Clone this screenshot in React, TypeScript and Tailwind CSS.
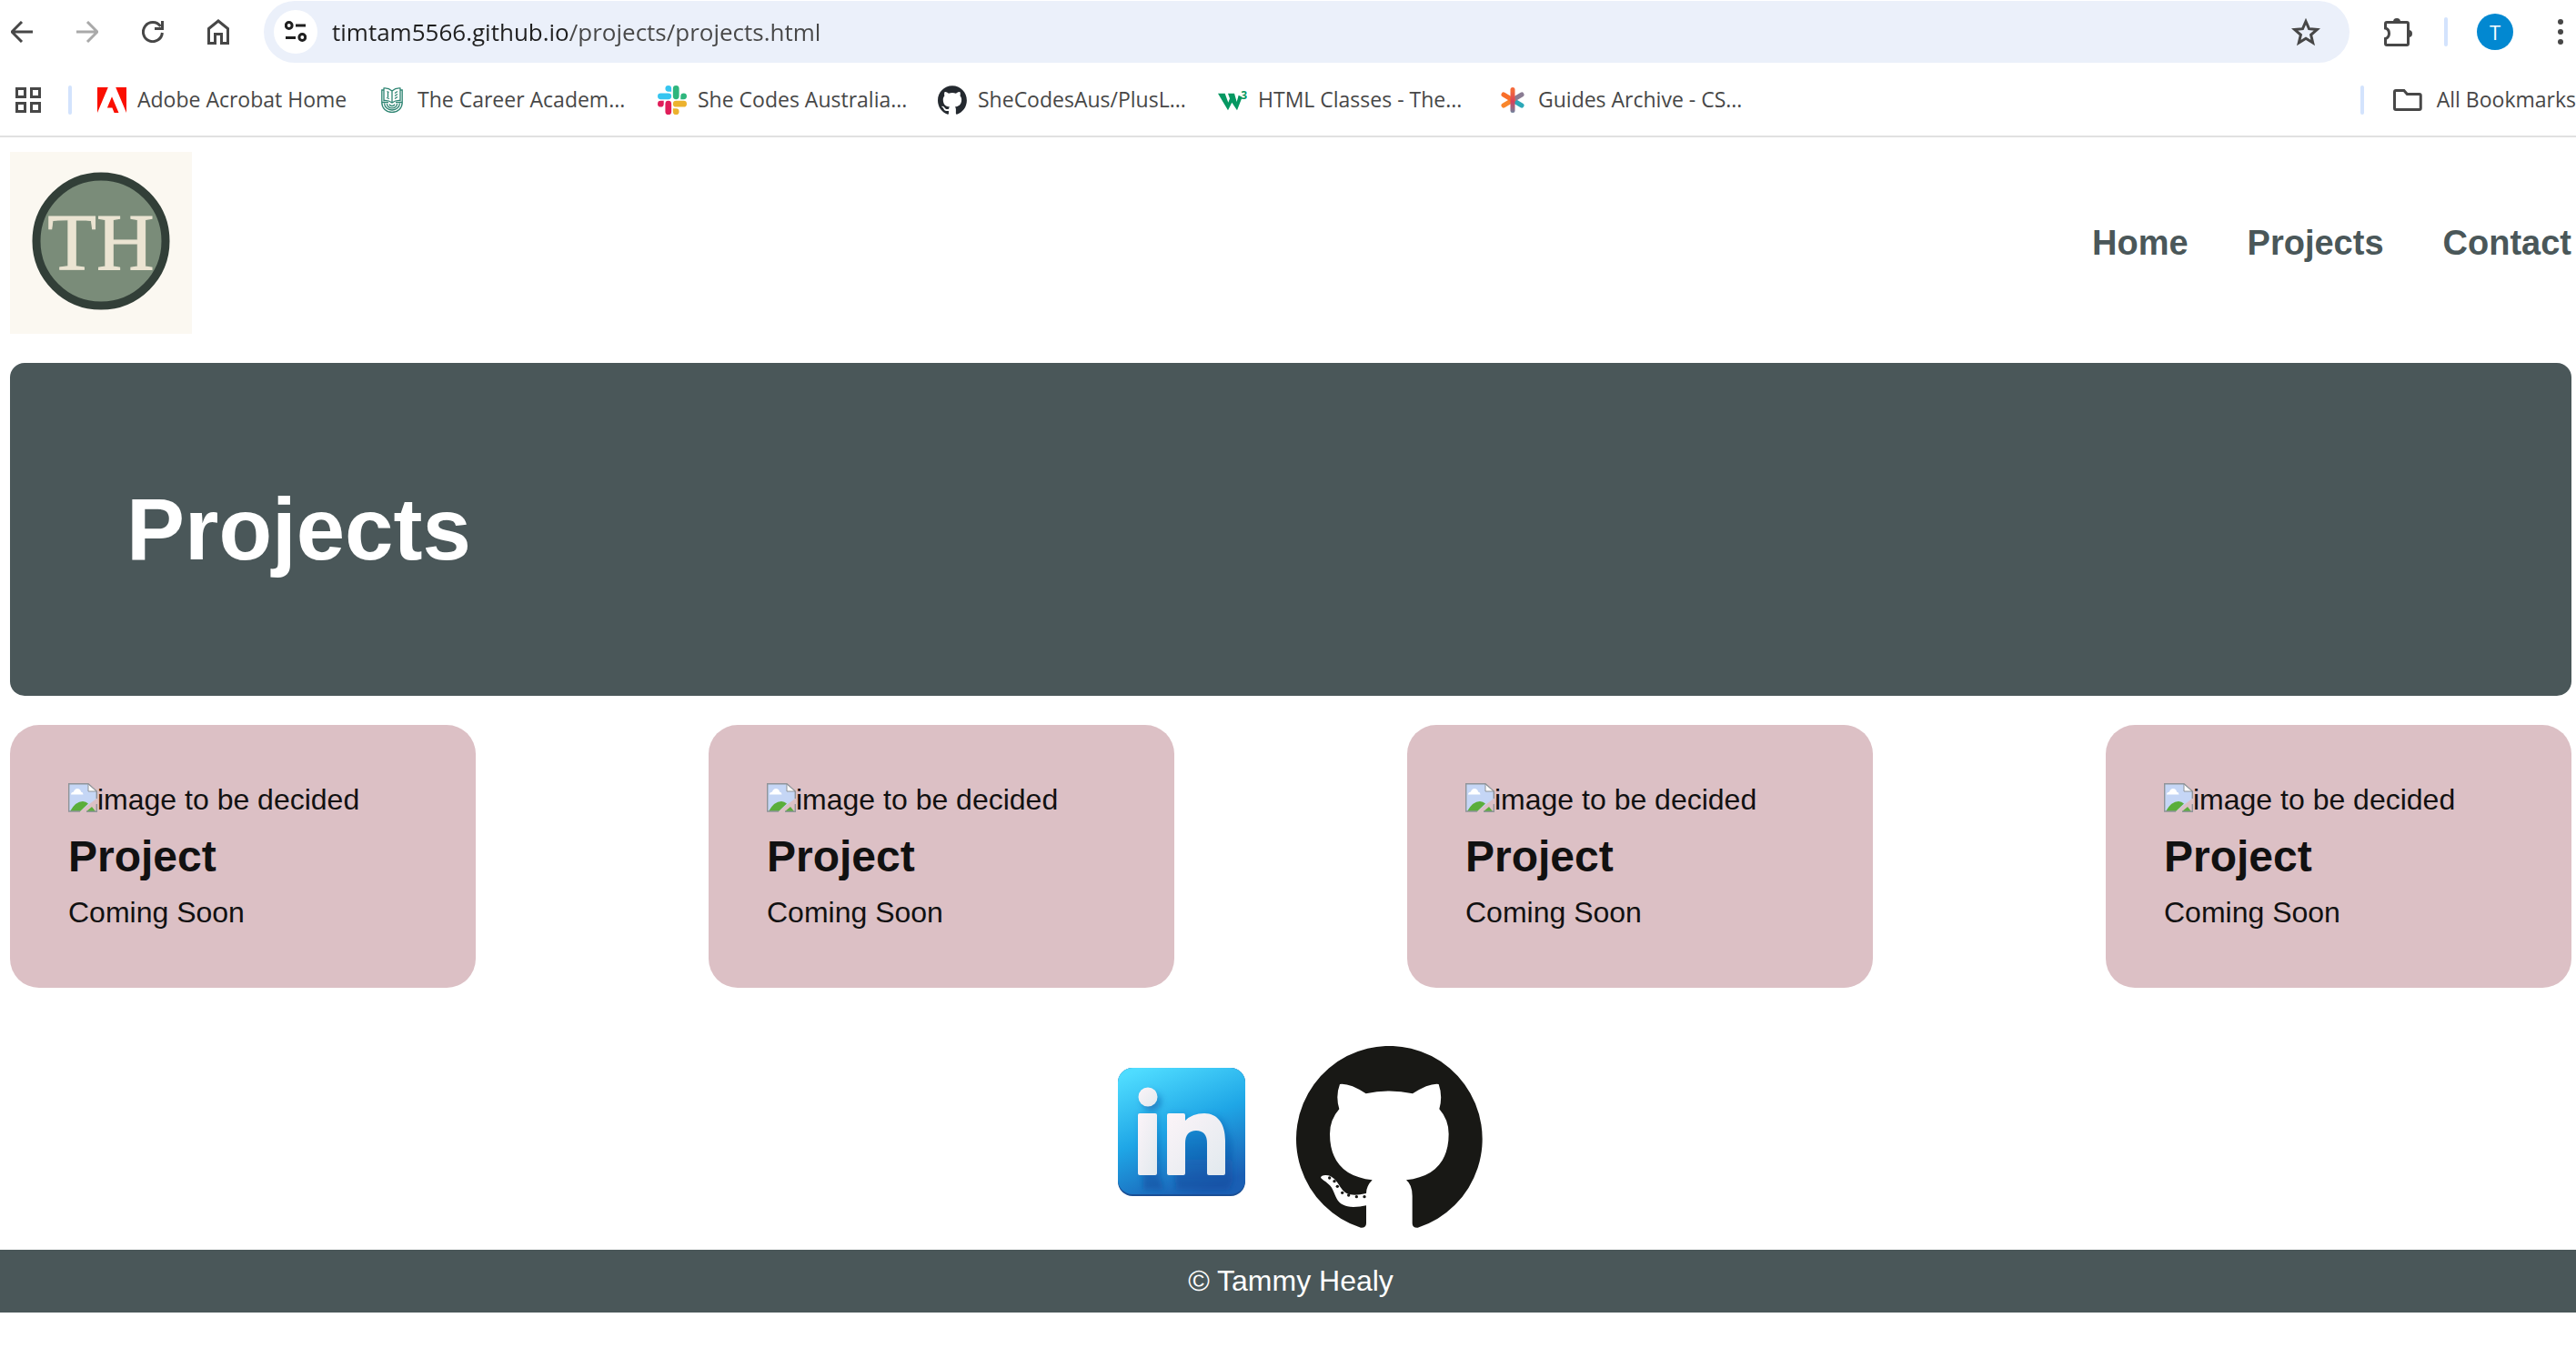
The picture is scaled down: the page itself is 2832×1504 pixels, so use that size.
import React from "react";

const INK = "#474747";

function BackIcon({ flip = false }: { flip?: boolean }) {
  return (
    <svg viewBox="0 0 24 24" className="size-6" fill="none" stroke={flip ? "#a9a9a9" : INK} strokeWidth="3">
      {flip ? <path d="M0 12H22M12 1 23 12 12 23" /> : <path d="M24 12H2M12 1 1 12 12 23" />}
    </svg>
  );
}

function ReloadIcon() {
  return (
    <svg viewBox="0 0 24 24" className="size-6" fill="none" stroke={INK} strokeWidth="3">
      <path d="M22.4 13A10.5 10.5 0 1 1 20.5 6" />
      <path d="M22.5 0V8.5H14" />
    </svg>
  );
}

function HomeIcon() {
  return (
    <svg viewBox="0 0 24 28" className="h-7 w-6" fill="none" stroke={INK} strokeWidth="3">
      <path d="M1.5 10.5 12 2 22.5 10.5V26.5H15.5V16.5H8.5V26.5H1.5Z" />
    </svg>
  );
}

function TuneIcon() {
  return (
    <svg viewBox="0 0 24 24" className="size-6" fill="none" stroke="#1f1f1f" strokeWidth="3">
      <circle cx="4.7" cy="5" r="3.4" />
      <path d="M12 5H23M1 18.500H12" />
      <circle cx="19.300" cy="18" r="3.4" />
    </svg>
  );
}

function StarIcon() {
  return (
    <svg viewBox="0 0 32 32" className="size-8" fill="none" stroke={INK} strokeWidth="3">
      <path d="M16 4.500 19.500 12.700 28.400 13.400 21.600 19.300 23.700 28 16 23.300 8.300 28 10.400 19.300 3.600 13.400 12.500 12.700Z" />
    </svg>
  );
}

function PuzzleIcon() {
  return (
    <svg viewBox="0 0 32 32" className="size-8">
      <path
        d="M1.500 12V7Q1.500 5.500 3 5.500H25Q26.500 5.500 26.500 7V29Q26.500 30.500 25 30.500H3Q1.500 30.500 1.500 29V23.500Q5.500 22.500 5.500 17.800T1.500 12Z"
        fill="none"
        stroke={INK}
        strokeWidth="3"
      />
      <path d="M10 5A4 4 0 0 1 18 5ZM27 14A4 4 0 0 1 27 22Z" fill={INK} />
    </svg>
  );
}

function DotsIcon() {
  return (
    <svg viewBox="0 0 8 28" className="h-7 w-2" fill={INK}>
      <circle cx="4" cy="3" r="3" />
      <circle cx="4" cy="14" r="3" />
      <circle cx="4" cy="25" r="3" />
    </svg>
  );
}

function GridIcon() {
  return (
    <svg viewBox="0 0 28 28" className="size-7" fill="none" stroke={INK} strokeWidth="3">
      <rect x="1.500" y="1.500" width="9" height="9" />
      <rect x="17.500" y="1.500" width="9" height="9" />
      <rect x="1.500" y="17.500" width="9" height="9" />
      <rect x="17.500" y="17.500" width="9" height="9" />
    </svg>
  );
}

function FolderIcon() {
  return (
    <svg viewBox="0 0 32 24" className="h-6 w-8" fill="none" stroke={INK} strokeWidth="3">
      <path d="M3 1.500H12L15.500 5.500H29Q30.500 5.500 30.500 7V21Q30.500 22.500 29 22.500H3Q1.500 22.500 1.500 21V3Q1.500 1.500 3 1.500Z" />
    </svg>
  );
}

function AdobeIcon() {
  return (
    <svg viewBox="0 0 32 28" className="h-7 w-8" fill="#fa0f00">
      <path d="M0 0H11.800L0 28ZM20.200 0H32V28ZM16 10.300 23.500 28H18.600L16.400 22.400H10.900Z" />
    </svg>
  );
}

function CareerIcon() {
  return (
    <svg viewBox="0 0 24 28" className="h-7 w-6" fill="none" stroke="#2f8573" strokeWidth="1.300">
      <path d="M12 4Q8 .5 3 1V14.500Q8 14 12 17Q16 14 21 14.500V1Q16 .5 12 4V17" />
      <path d="M3 3H.8V16.500H8M21 3H23.200V16.500H16" />
      <path d="M6.500 4.500 8.500 5.500M7.500 5V11M6 11.500 9 12.500M15 6.500 18 4.500M15 9.500 18 7.500M15 12.500 18 10.500" />
      <path d="M.8 17A11.200 10.500 0 0 0 23.200 17M3.600 17.500A8.400 7.500 0 0 0 20.400 17.500M6.400 18A5.600 4.800 0 0 0 17.600 18M9.300 18.500A2.700 2 0 0 0 14.700 18.500" />
    </svg>
  );
}

function SlackIcon() {
  return (
    <svg viewBox="0 0 24 24" className="size-8">
      <path
        fill="#36c5f0"
        d="M8.834 5.042a2.528 2.528 0 0 1-2.521-2.520A2.528 2.528 0 0 1 8.834 0a2.528 2.528 0 0 1 2.521 2.522v2.520H8.834zM8.834 6.313a2.528 2.528 0 0 1 2.521 2.521 2.528 2.528 0 0 1-2.521 2.521H2.522A2.528 2.528 0 0 1 0 8.834a2.528 2.528 0 0 1 2.522-2.521h6.312z"
      />
      <path
        fill="#2eb67d"
        d="M18.956 8.834a2.528 2.528 0 0 1 2.522-2.521A2.528 2.528 0 0 1 24 8.834a2.528 2.528 0 0 1-2.522 2.521h-2.522V8.834zM17.688 8.834a2.528 2.528 0 0 1-2.523 2.521 2.527 2.527 0 0 1-2.520-2.521V2.522A2.527 2.527 0 0 1 15.165 0a2.528 2.528 0 0 1 2.523 2.522v6.312z"
      />
      <path
        fill="#ecb22e"
        d="M15.165 18.956a2.528 2.528 0 0 1 2.523 2.522A2.528 2.528 0 0 1 15.165 24a2.527 2.527 0 0 1-2.520-2.522v-2.522h2.520zM15.165 17.688a2.527 2.527 0 0 1-2.520-2.523 2.526 2.526 0 0 1 2.520-2.520h6.313A2.527 2.527 0 0 1 24 15.165a2.528 2.528 0 0 1-2.522 2.523h-6.313z"
      />
      <path
        fill="#e01e5a"
        d="M5.042 15.165a2.528 2.528 0 0 1-2.520 2.523A2.528 2.528 0 0 1 0 15.165a2.527 2.527 0 0 1 2.522-2.520h2.520v2.520zM6.313 15.165a2.527 2.527 0 0 1 2.521-2.520 2.527 2.527 0 0 1 2.521 2.520v6.313A2.528 2.528 0 0 1 8.834 24a2.528 2.528 0 0 1-2.521-2.522v-6.313z"
      />
    </svg>
  );
}

function GithubIcon() {
  return (
    <svg viewBox="0 0 98 96" className="size-8" fill="#24292f">
      <path d="M48.854 0C21.839 0 0 22 0 49.217c0 21.756 13.993 40.172 33.405 46.690 2.427.490 3.316-1.059 3.316-2.362 0-1.141-.080-5.052-.080-9.127-13.590 2.934-16.420-5.867-16.420-5.867-2.184-5.704-5.420-7.170-5.420-7.170-4.448-3.015.324-3.015.324-3.015 4.934.326 7.523 5.052 7.523 5.052 4.367 7.496 11.404 5.378 14.235 4.074.404-3.178 1.699-5.378 3.074-6.600-10.839-1.141-22.243-5.378-22.243-24.283 0-5.378 1.940-9.778 5.014-13.200-.485-1.222-2.184-6.275.486-13.038 0 0 4.125-1.304 13.426 5.052a46.970 46.970 0 0 1 12.214-1.630c4.125 0 8.330.571 12.213 1.630 9.302-6.356 13.427-5.052 13.427-5.052 2.670 6.763.970 11.816.485 13.038 3.155 3.422 5.015 7.822 5.015 13.200 0 18.905-11.404 23.060-22.324 24.283 1.780 1.548 3.316 4.481 3.316 9.126 0 6.600-.080 11.897-.080 13.526 0 1.304.890 2.853 3.316 2.364 19.412-6.520 33.405-24.935 33.405-46.691C97.707 22 75.788 0 48.854 0z" />
    </svg>
  );
}

function W3Icon() {
  return (
    <svg viewBox="0 0 96 96" className="size-8">
      <path d="M0 26H23L34 56L39 43L33 26H54L62 54L68 32L80 38L63 82L46 56L33 82Z" fill="#059862" />
      <text x="76" y="44" fontFamily="Open Sans, sans-serif" fontSize="36" fontWeight="700" fill="#059862">
        3
      </text>
    </svg>
  );
}

function AsteriskIcon() {
  return (
    <svg viewBox="0 0 32 32" className="size-8" fill="none" strokeWidth="5" strokeLinecap="round">
      <defs>
        <linearGradient id="arm" x1="0" y1="0" x2="0" y2="32" gradientUnits="userSpaceOnUse">
          <stop offset="0.200" stopColor="#f4693b" />
          <stop offset="0.550" stopColor="#d9415c" />
          <stop offset="0.950" stopColor="#6a86a0" />
        </linearGradient>
      </defs>
      <path d="M16 16 26 22" stroke="#2ba8b8" />
      <path d="M16 16 26 10" stroke="#8a7c93" />
      <path d="M16 16 6 22" stroke="#f9862b" />
      <path d="M16 16 6 10" stroke="#f96f2a" />
      <path d="M16 4.500V27.500" stroke="url(#arm)" />
    </svg>
  );
}

const bookmarks = [
  { label: "Adobe Acrobat Home", icon: <AdobeIcon /> },
  { label: "The Career Academ...", icon: <CareerIcon /> },
  { label: "She Codes Australia...", icon: <SlackIcon /> },
  { label: "SheCodesAus/PlusL...", icon: <GithubIcon /> },
  { label: "HTML Classes - The...", icon: <W3Icon /> },
  { label: "Guides Archive - CS...", icon: <AsteriskIcon /> },
];

function IconButton({ label, children }: { label: string; children: React.ReactNode }) {
  return (
    <button type="button" aria-label={label} className="flex size-12 shrink-0 items-center justify-center">
      {children}
    </button>
  );
}

function Divider() {
  return <span className="h-8 w-1 shrink-0 rounded-xs bg-[#d3e3fd]" />;
}

function Browser() {
  return (
    <div className="border-b-2 border-[#e1e1e1] bg-white font-['Open_Sans',sans-serif] text-[#474747]">
      <div className="flex items-center py-px">
        <div className="flex shrink-0 gap-6 pr-[26px]">
          <IconButton label="Back"><BackIcon /></IconButton>
          <IconButton label="Forward"><BackIcon flip /></IconButton>
          <IconButton label="Reload"><ReloadIcon /></IconButton>
          <IconButton label="Home"><HomeIcon /></IconButton>
        </div>
        <div className="flex h-[68px] grow items-center rounded-full bg-[#ebf0fa] pr-6 pl-[11px]">
          <button type="button" aria-label="View site information" className="flex size-12 items-center justify-center rounded-full bg-white">
            <TuneIcon />
          </button>
          <input
            type="text"
            aria-label="Address"
            defaultValue="timtam5566.github.io/projects/projects.html"
            className="ml-4 h-12 min-w-0 grow bg-[linear-gradient(to_right,#1f1f1f_262px,#474747_262px)] bg-clip-text text-[26px] text-transparent outline-none"
          />
          <IconButton label="Bookmark this tab"><StarIcon /></IconButton>
        </div>
        <div className="flex shrink-0 items-center pl-[30px]">
          <IconButton label="Extensions"><PuzzleIcon /></IconButton>
          <div className="flex pr-8 pl-[26px]"><Divider /></div>
          <button type="button" aria-label="Profile" className="flex size-10 items-center justify-center rounded-full bg-[#0288d1] text-[22px] text-white">
            T
          </button>
          <button type="button" aria-label="Menu" className="flex h-12 w-[69px] items-center justify-end pr-[13px] pl-8"><DotsIcon /></button>
        </div>
      </div>
      <div className="flex h-[79px] items-center pl-[17px] text-[23px] whitespace-nowrap">
        <button type="button" aria-label="Tab groups" className="mr-[30px]"><GridIcon /></button>
        <Divider />
        <nav aria-label="Bookmarks" className="ml-7 flex grow">
          {bookmarks.map((b) => (
            <a key={b.label} href="#" className="flex w-[308px] items-center gap-3">
              <span className="flex w-8 shrink-0 justify-center">{b.icon}</span>
              {b.label}
            </a>
          ))}
        </nav>
        <Divider />
        <button type="button" className="ml-8 flex w-[201px] items-center gap-4">
          <FolderIcon />
          All Bookmarks
        </button>
      </div>
    </div>
  );
}

function Monogram() {
  return (
    <svg viewBox="0 0 200 200" className="size-[200px]">
      <rect width="200" height="200" fill="#fbf8f1" />
      <circle cx="100" cy="98" r="71" fill="#7a8c79" stroke="#323f38" strokeWidth="9" />
      <text
        x="100"
        y="129"
        textAnchor="middle"
        fontFamily="Liberation Serif, serif"
        fontSize="88"
        fill="#ebe4d2"
        stroke="#ebe4d2"
        strokeWidth="1"
      >
        TH
      </text>
    </svg>
  );
}

function BrokenImage() {
  return (
    <svg viewBox="0 0 32 32" className="size-8 shrink-0" aria-hidden="true">
      <path d="M1 1H22L31 9V17L13 31H1Z" fill="#c5d6f5" />
      <path d="M3 12.500Q3 10 6 9.500Q7 6 10 6Q13.500 6 14 9.500Q16.500 10 16.500 12.500Z" fill="#fff" />
      <path d="M2 31Q8 20 16 20Q19.500 20 22 22.500L13 31ZM20 31 26 26 30 31Z" fill="#5aae3a" />
      <path d="M13 31H.7V.7H22L31.300 9V17M31.300 23V31.300H20" fill="none" stroke="#8f9499" strokeWidth="1.400" />
      <path d="M22 1V9H31Z" fill="#fff" stroke="#8f9499" />
    </svg>
  );
}

function LinkedInLogo() {
  return (
    <svg viewBox="0 0 188 188" className="size-[188px]">
      <defs>
        <linearGradient id="tile" x1="0.200" y1="0" x2="0.600" y2="1">
          <stop offset="0" stopColor="#4fdcff" />
          <stop offset="0.500" stopColor="#1fa6e6" />
          <stop offset="1" stopColor="#1a5fb4" />
        </linearGradient>
        <linearGradient id="face" x1="0" y1="0" x2="1" y2="1">
          <stop offset="0" stopColor="#fcf4f8" />
          <stop offset="1" stopColor="#e1e9ee" />
        </linearGradient>
        <linearGradient id="cast" x1="0" y1="0" x2="0" y2="1">
          <stop offset="0" stopColor="#0f4fa6" stopOpacity="0.200" />
          <stop offset="1" stopColor="#0f4a9c" stopOpacity="0.600" />
        </linearGradient>
        <filter id="soft">
          <feGaussianBlur stdDeviation="3" />
        </filter>
      </defs>
      <rect x="24" y="24" width="140" height="141" rx="16" fill="#1a4f95" />
      <rect x="24" y="24" width="140" height="139" rx="16" fill="url(#tile)" />
      <g filter="url(#soft)" fill="url(#cast)">
        <circle cx="61" cy="60" r="11" />
        <path d="M47 74H70V142L74 158H52ZM80 74H101V83Q132 66 142 84L150 105V150L146 158H88Z" />
      </g>
      <g fill="url(#face)">
        <circle cx="57" cy="56" r="10.500" />
        <rect x="46" y="74" width="21" height="68" rx="2" />
        <path d="M78 76Q78 74 80 74H96Q98 74 98 76V82Q106 74 119 74C134 74 142 86 142 104V140Q142 142 140 142H124Q122 142 122 140V107Q122 93 110 93Q98 93 98 107V140Q98 142 96 142H80Q78 142 78 140Z" />
      </g>
    </svg>
  );
}

function OctocatLogo() {
  const spots = [[789, 495], [805, 506], [815, 523], [831, 544], [852, 552], [878, 557], [904, 557]];
  return (
    <svg viewBox="679 60 615 600" className="h-[200px] w-[205px]" fill="#181815">
      <path d="M892 659A307 307 0 1 1 1080 659Q1062 660 1062 645V555Q1062 518 1042 502C1130 492 1182 445 1182 350Q1182 303 1151 268Q1163 225 1149 186Q1118 182 1063 217Q986 200 909 217Q855 182 823 186Q808 225 821 268Q790 303 790 350C790 445 842 492 930 502Q910 522 910 546Q880 553 858 550C822 545 822 498 785 487Q762 484 760 494C765 502 785 510 795 526C812 552 808 590 868 591Q890 591 910 586V645Q910 660 892 659Z" />
      {spots.map(([x, y]) => (
        <circle key={x} cx={x} cy={y} r="5" />
      ))}
    </svg>
  );
}

export default function App() {
  return (
    <div className="bg-white">
      <Browser />
      <div className="font-['Liberation_Sans',Arial,sans-serif] text-[#111111]">
        <div className="flex flex-col gap-8 pt-4 pr-[5px] pl-[11px]">
          <header className="flex items-center justify-between">
            <a href="#" aria-label="Home page"><Monogram /></a>
            <nav aria-label="Main" className="flex gap-[65px] text-[38px] font-bold text-[#4a5759]">
              <a href="#">Home</a>
              <a href="#">Projects</a>
              <a href="#">Contact</a>
            </nav>
          </header>
          <section className="rounded-2xl bg-[#4a5759] p-32">
            <h1 className="text-[96px] leading-[110px] font-bold text-white">Projects</h1>
          </section>
          <main className="flex justify-between">
            {[0, 1, 2, 3].map((n) => (
              <article key={n} className="flex w-[512px] flex-col gap-4 rounded-4xl bg-[#dcc0c5] p-16 text-[32px] leading-[37px]">
                <div className="flex">
                  <BrokenImage />
                  image to be decided
                </div>
                <h2 className="text-[48px] leading-[55px] font-bold">Project</h2>
                <p>Coming Soon</p>
              </article>
            ))}
          </main>
        </div>
        <footer className="pt-16">
          <div className="flex justify-center gap-8 pr-[5px] pb-6 pl-2">
            <a href="#" aria-label="LinkedIn"><LinkedInLogo /></a>
            <a href="#" aria-label="GitHub"><OctocatLogo /></a>
          </div>
          <p className="bg-[#4a5759] py-4 pl-1.5 text-center text-[32px] leading-[37px] text-white">© Tammy Healy</p>
        </footer>
      </div>
    </div>
  );
}
